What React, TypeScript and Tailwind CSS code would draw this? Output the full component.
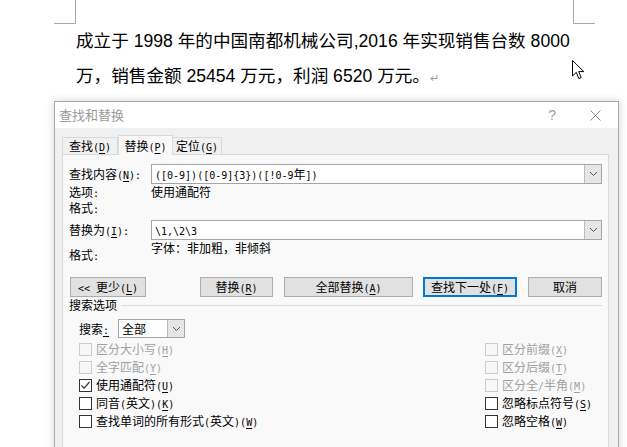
import React from "react";

// half-width latin like the SimSun dialog font
function M({ children }: { children: React.ReactNode }) {
  return <span className="font-['DejaVu_Sans_Mono',monospace] text-[10px]">{children}</span>;
}

function Hk({ text, k }: { text: string; k: string }) {
  return (
    <span className="whitespace-nowrap">
      {text}
      <M>
        (<span className="underline underline-offset-2">{k}</span>)
      </M>
    </span>
  );
}

function Chevron() {
  return (
    <svg width="9" height="6" viewBox="0 0 9 6" className="block">
      <path d="M1 1 L4.5 4.5 L8 1" fill="none" stroke="#555" strokeWidth="1" />
    </svg>
  );
}

function Combo({ children }: { children: React.ReactNode }) {
  return (
    <div className="flex-1 h-[20px] flex border border-[#a5a5a5] bg-white">
      <div className="flex-1 pl-[3px] leading-[18px] whitespace-nowrap">{children}</div>
      <div className="w-[17px] h-[18px] flex items-center justify-center bg-[#e6e6e6] border-l border-[#bcbcbc]">
        <Chevron />
      </div>
    </div>
  );
}

function Btn({ w, children, primary }: { w: string; children: React.ReactNode; primary?: boolean }) {
  return (
    <div
      className={`${w} h-[20px] flex items-center justify-center bg-[#e1e1e1] ${
        primary ? "border-2 border-[#0078d7]" : "border border-[#adadad]"
      }`}
    >
      {children}
    </div>
  );
}

function Check({ checked, disabled, children }: { checked?: boolean; disabled?: boolean; children: React.ReactNode }) {
  return (
    <div className={`h-[18px] flex items-center gap-[4px] ${disabled ? "text-[#a0a0a0]" : "text-black"}`}>
      <div
        className={`w-[13px] h-[13px] flex items-center justify-center border ${
          disabled ? "border-[#cccccc] bg-[#f7f7f7]" : "border-[#333333] bg-white"
        }`}
      >
        {checked && (
          <svg width="11" height="11" viewBox="0 0 11 11">
            <path d="M1.5 5.5 L4.2 8.2 L9.5 2" fill="none" stroke="#333" strokeWidth="1.2" />
          </svg>
        )}
      </div>
      <span className="whitespace-nowrap">{children}</span>
    </div>
  );
}

export default function App() {
  return (
    <div className="relative w-[627px] h-[447px] overflow-hidden bg-white font-['Liberation_Sans','Noto_Sans_CJK_SC',sans-serif]">
      {/* margin marks */}
      <div className="absolute left-[54px] top-0 w-[22px] h-[24px] border-r border-b border-[#a8a8a8]" />
      <div className="absolute left-[573px] top-0 w-[22px] h-[24px] border-l border-b border-[#a8a8a8]" />

      {/* document text */}
      <div className="pl-[76px] pt-[24px] text-[17.6px] leading-[35px] text-black">
        <div className="whitespace-nowrap">成立于 1998 年的中国南都机械公司,2016 年实现销售台数 8000</div>
        <div className="whitespace-nowrap">
          万，销售金额 25454 万元，利润 6520 万元。
          <span className="text-[11px] text-[#9a9a9a]">↵</span>
        </div>
      </div>

      {/* mouse cursor */}
      <svg className="absolute left-[572px] top-[60px]" width="13" height="20" viewBox="0 0 13 20">
        <path d="M0.5 0.5 L0.5 16 L4.3 12.4 L6.8 18.6 L9.2 17.6 L6.7 11.6 L11.8 11.6 Z" fill="white" stroke="black" strokeWidth="1" />
      </svg>

      {/* dialog */}
      <div className="absolute left-[54px] top-[101px] w-[565px] h-[360px] border border-[#a9a9a9] bg-[#f0f0f0] shadow-[0_0_8px_rgba(0,0,0,0.18)] text-[12px] text-black font-['Noto_Sans_CJK_SC',sans-serif]">
        {/* title bar */}
        <div className="h-[26px] bg-white flex items-center pl-[4px] pr-[17px] text-[#9b9b9b]">
          <span className="text-[13px]">查找和替换</span>
          <span className="ml-auto text-[14px] font-['Liberation_Sans',sans-serif] text-[#a0a0a0]">?</span>
          <svg className="ml-[34px]" width="11" height="11" viewBox="0 0 11 11">
            <path d="M0.5 0.5 L10.5 10.5 M10.5 0.5 L0.5 10.5" stroke="#8a8a8a" strokeWidth="1" />
          </svg>
        </div>

        <div className="pl-[7px] pr-[9px] pt-[7px]">
          {/* tabs */}
          <div className="flex items-end h-[19px]">
            <div className="w-[56px] h-[17px] flex items-center justify-center border border-b-0 border-[#d9d9d9] bg-[#f0f0f0]">
              <Hk text="查找" k="D" />
            </div>
            <div className="relative z-10 -mb-px w-[55px] h-[20px] flex items-center justify-center border border-b-0 border-[#d9d9d9] bg-[#f9f9f9]">
              <Hk text="替换" k="P" />
            </div>
            <div className="w-[49px] h-[17px] flex items-center justify-center border border-b-0 border-l-0 border-[#d9d9d9] bg-[#f0f0f0]">
              <Hk text="定位" k="G" />
            </div>
          </div>

          {/* panel */}
          <div className="h-[320px] border border-[#d9d9d9] bg-[#f9f9f9] pl-[6px] pr-[6px]">
            <div className="mt-[9px] h-[20px] flex items-center">
              <div className="w-[82px]">
                <Hk text="查找内容" k="N" />
                <M>:</M>
              </div>
              <Combo>
                <M>([0-9])([0-9]{"{3}"})([!0-9</M>年<M>])</M>
              </Combo>
            </div>
            <div className="h-[16px] flex items-center">
              <div className="w-[82px]">
                选项<M>:</M>
              </div>
              <div>使用通配符</div>
            </div>
            <div className="h-[16px] flex items-center">
              <div className="w-[82px]">
                格式<M>:</M>
              </div>
            </div>
            <div className="mt-[4px] h-[20px] flex items-center">
              <div className="w-[82px]">
                <Hk text="替换为" k="I" />
                <M>:</M>
              </div>
              <Combo>
                <M>\1,\2\3</M>
              </Combo>
            </div>
            <div className="h-[24px] flex items-start leading-[14px]">
              <div className="w-[82px] pt-[8px]">
                格式<M>:</M>
              </div>
              <div className="pt-[1px]">字体：非加粗，非倾斜</div>
            </div>

            {/* buttons */}
            <div className="mt-[13px] flex">
              <div className="ml-[1px]">
                <Btn w="w-[76px]">
                  <span className="whitespace-nowrap">
                    <M>&lt;&lt; </M>更少
                    <M>
                      (<span className="underline underline-offset-2">L</span>)
                    </M>
                  </span>
                </Btn>
              </div>
              <div className="ml-[54px]">
                <Btn w="w-[73px]">
                  <Hk text="替换" k="R" />
                </Btn>
              </div>
              <div className="ml-[11px]">
                <Btn w="w-[129px]">
                  <Hk text="全部替换" k="A" />
                </Btn>
              </div>
              <div className="ml-[10px]">
                <Btn w="w-[94px]" primary>
                  <Hk text="查找下一处" k="F" />
                </Btn>
              </div>
              <div className="ml-[11px]">
                <Btn w="w-[74px]">取消</Btn>
              </div>
            </div>

            {/* search options */}
            <div className="h-[16px] flex items-center gap-[4px]">
              <span className="whitespace-nowrap">搜索选项</span>
              <div className="flex-1 h-px bg-[#dcdcdc]" />
            </div>
            <div className="mt-[6px] h-[19px] flex items-center pl-[10px]">
              <span className="w-[39px] whitespace-nowrap">
                搜索
                <M>
                  <span className="underline underline-offset-2">:</span>
                </M>
              </span>
              <div className="w-[67px] h-[19px] flex border border-[#a5a5a5] bg-white">
                <div className="flex-1 pl-[3px] leading-[17px]">全部</div>
                <div className="w-[17px] h-[17px] flex items-center justify-center bg-[#e6e6e6] border-l border-[#bcbcbc]">
                  <Chevron />
                </div>
              </div>
            </div>

            <div className="mt-[2px] flex pl-[10px]">
              <div className="w-[406px] flex flex-col">
                <Check disabled>
                  <Hk text="区分大小写" k="H" />
                </Check>
                <Check disabled>
                  <Hk text="全字匹配" k="Y" />
                </Check>
                <Check checked>
                  <Hk text="使用通配符" k="U" />
                </Check>
                <Check>
                  同音<M>(</M>英文<M>)</M>
                  <Hk text="" k="K" />
                </Check>
                <Check>
                  查找单词的所有形式<M>(</M>英文<M>)</M>
                  <Hk text="" k="W" />
                </Check>
              </div>
              <div className="flex flex-col">
                <Check disabled>
                  <Hk text="区分前缀" k="X" />
                </Check>
                <Check disabled>
                  <Hk text="区分后缀" k="T" />
                </Check>
                <Check disabled>
                  区分全<M>/</M>
                  <Hk text="半角" k="M" />
                </Check>
                <Check>
                  <Hk text="忽略标点符号" k="S" />
                </Check>
                <Check>
                  <Hk text="忽略空格" k="W" />
                </Check>
              </div>
            </div>
          </div>
        </div>
      </div>
    </div>
  );
}
